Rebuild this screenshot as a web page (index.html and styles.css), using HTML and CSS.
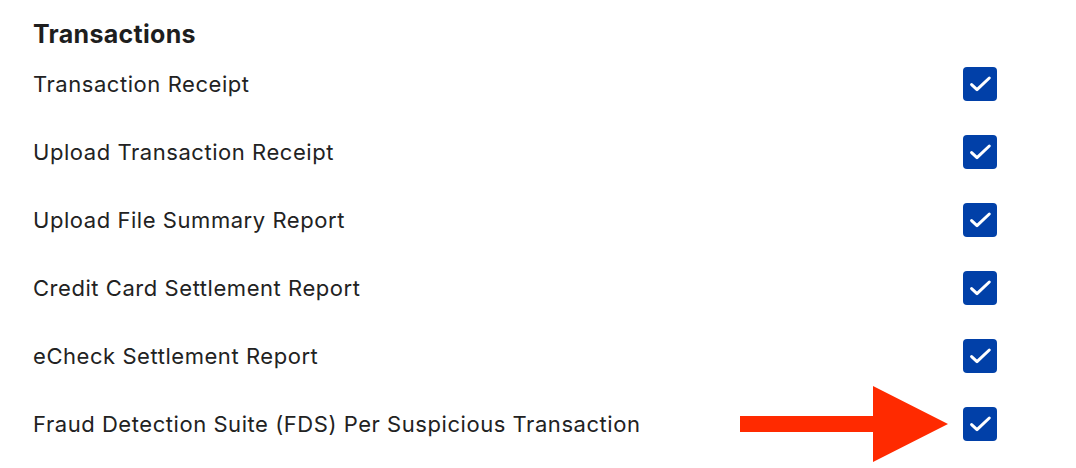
FILE: index.html
```html
<!DOCTYPE html>
<html>
<head>
<meta charset="utf-8">
<link rel="stylesheet" href="styles.css">
</head>
<body>
<section class="panel">
  <h2 class="title">Transactions</h2>
  <ul class="list">
    <li class="row"><span class="label">Transaction Receipt</span><span class="check"><svg viewBox="0 0 34 34"><path d="M8.6 17.6l5.4 5 12.3-11.6" /></svg></span></li>
    <li class="row"><span class="label">Upload Transaction Receipt</span><span class="check"><svg viewBox="0 0 34 34"><path d="M8.6 17.6l5.4 5 12.3-11.6" /></svg></span></li>
    <li class="row"><span class="label">Upload File Summary Report</span><span class="check"><svg viewBox="0 0 34 34"><path d="M8.6 17.6l5.4 5 12.3-11.6" /></svg></span></li>
    <li class="row"><span class="label">Credit Card Settlement Report</span><span class="check"><svg viewBox="0 0 34 34"><path d="M8.6 17.6l5.4 5 12.3-11.6" /></svg></span></li>
    <li class="row"><span class="label wide">eCheck Settlement Report</span><span class="check"><svg viewBox="0 0 34 34"><path d="M8.6 17.6l5.4 5 12.3-11.6" /></svg></span></li>
    <li class="row"><span class="label">Fraud Detection Suite (FDS) Per Suspicious Transaction</span><span class="check"><svg viewBox="0 0 34 34"><path d="M8.6 17.6l5.4 5 12.3-11.6" /></svg></span>
      <svg class="arrow" viewBox="0 0 208 76"><polygon points="0,30 133,30 133,0 208,38 133,76 133,46 0,46" /></svg>
    </li>
  </ul>
</section>
</body>
</html>
```
FILE: styles.css
```css
html, body {
  margin: 0;
  padding: 0;
  background: #ffffff;
}
body {
  width: 1076px;
  height: 468px;
  overflow: hidden;
  font-family: Inter, "Noto Sans", sans-serif;
  color: #222222;
}
.panel {
  padding: 18px 79px 0 33px;
}
.title {
  margin: 0;
  font-size: 25px;
  font-weight: 700;
  line-height: 32px;
  letter-spacing: 0.3px;
  color: #1e1e1e;
}
.list {
  list-style: none;
  margin: 0;
  padding: 0;
}
.row {
  position: relative;
  display: flex;
  align-items: center;
  justify-content: space-between;
  height: 68px;
}
.label {
  font-size: 22px;
  font-weight: 400;
  letter-spacing: 0.55px;
}
.check {
  width: 34px;
  height: 34px;
  border-radius: 4px;
  background: #0140a8;
  display: block;
}
.check svg {
  width: 34px;
  height: 34px;
  display: block;
}
.check path {
  fill: none;
  stroke: #ffffff;
  stroke-width: 3;
  stroke-linecap: round;
  stroke-linejoin: round;
}
.arrow {
  position: absolute;
  left: 707px;
  top: -4px;
  width: 208px;
  height: 76px;
  fill: #ff2a00;
}
```
